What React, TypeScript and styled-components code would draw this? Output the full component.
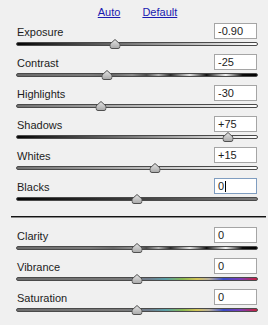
import React from "react";
import styled, { createGlobalStyle } from "styled-components";

const Global = createGlobalStyle`
  html, body { margin: 0; padding: 0; background: #f0f0f0; }
  body { font-family: "Liberation Sans", Arial, sans-serif; }
`;

const Panel = styled.div`
  width: 268px;
  height: 325px;
  box-sizing: border-box;
  padding: 6px 10px 0 16px;
  background: #f0f0f0;
  font-family: "Liberation Sans", Arial, sans-serif;
  font-size: 11px;
  color: #1c1c1c;
  display: flex;
  flex-direction: column;
`;

const LinkRow = styled.div`
  display: flex;
  justify-content: center;
  gap: 22px;
  height: 13px;
  line-height: 13px;
  margin-bottom: 4px;
  padding-left: 1px;
`;

const Link = styled.a`
  color: #1a1ab0;
  text-decoration: underline;
  cursor: pointer;
`;

const Row = styled.div`
  display: flex;
  flex-direction: column;
  margin-bottom: 5px;
`;

const Header = styled.div`
  display: flex;
  justify-content: space-between;
  align-items: center;
  height: 16px;
`;

const Label = styled.span`
  padding-left: 1px;
  padding-top: 3px;
  line-height: 13px;
`;

const ValueBox = styled.div<{ $focused?: boolean }>`
  width: 43px;
  height: 16px;
  box-sizing: border-box;
  margin-right: 1px;
  background: #fff;
  border: 1px solid ${(p) => (p.$focused ? "#7f9dc0" : "#a5a5a5")};
  padding-left: 3px;
  line-height: 14px;
  display: flex;
  align-items: center;
`;

const Caret = styled.span`
  display: inline-block;
  width: 1px;
  height: 11px;
  background: #000;
  margin-left: 1px;
`;

const SliderWrap = styled.div`
  position: relative;
  height: 10px;
  display: flex;
  align-items: center;
`;

const Track = styled.div<{ $bg: string }>`
  width: 100%;
  height: 4px;
  box-sizing: border-box;
  border-radius: 2px;
  border: 1px solid #4a4a4a;
  background: ${(p) => p.$bg};
`;

const ThumbHolder = styled.div`
  position: absolute;
  top: 0;
  width: 11px;
  height: 10px;
  transform: translateX(-50%);
`;

const Divider = styled.div`
  height: 1px;
  background: #141414;
  margin: 7px -8px 9px -5px;
  border-bottom: 1px solid #8a8a8a;
`;

const grads = {
  bw: "linear-gradient(to right, #050505, #9a9a9a 60%, #ffffff)",
  grayWhite: "linear-gradient(to right, #707070, #ffffff)",
  blackGray: "linear-gradient(to right, #050505, #7a7a7a)",
  contrast:
    "linear-gradient(to right, #6a6a6a 0%, #7c7c7c 30%, #6a6a6a 40%, #8c8c8c 48%, #4a4a4a 54%, #b0b0b0 59%, #2a2a2a 64%, #e4e4e4 72%, #111 79%, #f2f2f2 87%, #0a0a0a 94%, #000 100%)",
  color:
    "linear-gradient(to right, #6e6e6e 0%, #7a7a7a 45%, #6f7c8c 55%, #5aa0a8 62%, #88b850 69%, #d4c458 75%, #b8b0a0 80%, #3a4cc8 86%, #7a3cb8 93%, #c8203c 100%)",
};

type Item = { label: string; value: string; pos: number; bg: string; focused?: boolean };

const top: Item[] = [
  { label: "Exposure", value: "-0.90", pos: 0.41, bg: grads.bw },
  { label: "Contrast", value: "-25", pos: 0.375, bg: grads.contrast },
  { label: "Highlights", value: "-30", pos: 0.35, bg: grads.grayWhite },
  { label: "Shadows", value: "+75", pos: 0.875, bg: grads.bw },
  { label: "Whites", value: "+15", pos: 0.575, bg: grads.grayWhite },
  { label: "Blacks", value: "0", pos: 0.5, bg: grads.blackGray, focused: true },
];

const bottom: Item[] = [
  { label: "Clarity", value: "0", pos: 0.5, bg: grads.contrast },
  { label: "Vibrance", value: "0", pos: 0.5, bg: grads.color },
  { label: "Saturation", value: "0", pos: 0.5, bg: grads.color },
];

const Thumb = () => (
  <svg width="11" height="10" viewBox="0 0 11 10">
    <defs>
      <linearGradient id="tg" x1="0" y1="0" x2="0" y2="1">
        <stop offset="0" stopColor="#e4e4e4" />
        <stop offset="1" stopColor="#a8a8a8" />
      </linearGradient>
    </defs>
    <path
      d="M5.5 0.5 L10.5 5 L10.5 7.5 Q10.5 9.5 8.5 9.5 L2.5 9.5 Q0.5 9.5 0.5 7.5 L0.5 5 Z"
      fill="url(#tg)"
      stroke="#505050"
      strokeWidth="1"
    />
  </svg>
);

const SliderRow = ({ item }: { item: Item }) => (
  <Row>
    <Header>
      <Label>{item.label}</Label>
      <ValueBox $focused={item.focused}>
        {item.value}
        {item.focused && <Caret />}
      </ValueBox>
    </Header>
    <SliderWrap>
      <Track $bg={item.bg} />
      <ThumbHolder style={{ left: `${item.pos * 100}%` }}>
        <Thumb />
      </ThumbHolder>
    </SliderWrap>
  </Row>
);

export default function App() {
  return (
    <>
      <Global />
      <Panel>
        <LinkRow>
          <Link>Auto</Link>
          <Link>Default</Link>
        </LinkRow>
        {top.map((it) => (
          <SliderRow key={it.label} item={it} />
        ))}
        <Divider />
        {bottom.map((it) => (
          <SliderRow key={it.label} item={it} />
        ))}
      </Panel>
    </>
  );
}
